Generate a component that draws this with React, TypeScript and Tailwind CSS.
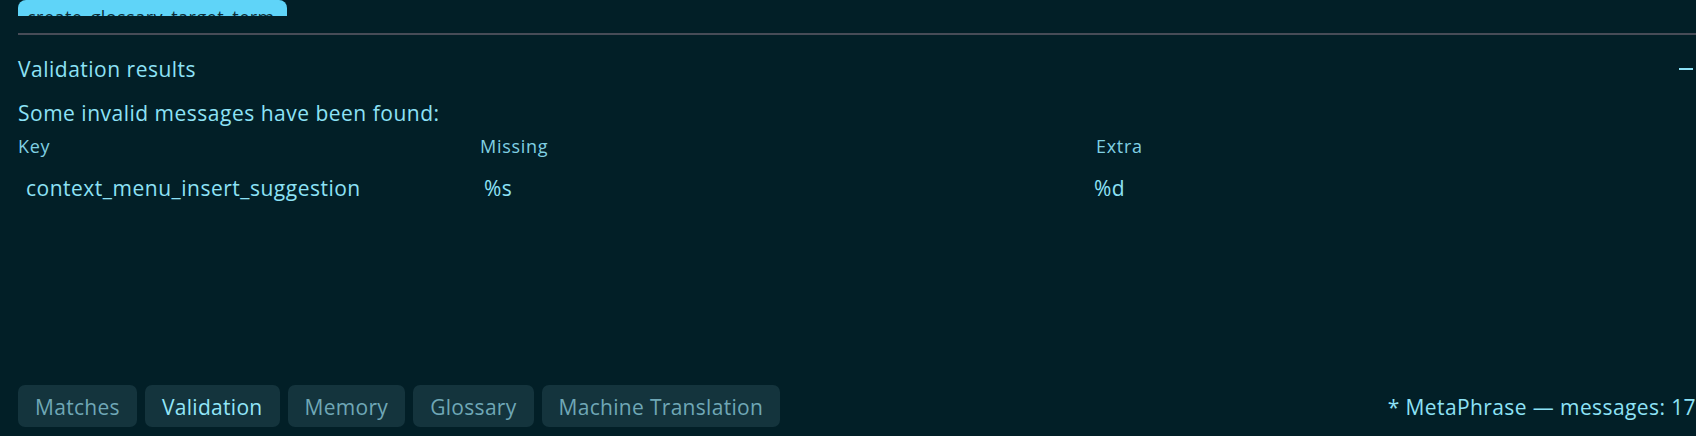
import React from "react"

const tabs = [
  { label: "Matches", active: false },
  { label: "Validation", active: true },
  { label: "Memory", active: false },
  { label: "Glossary", active: false },
  { label: "Machine Translation", active: false },
]

export default function App() {
  return (
    <div
      className="h-[436px] w-[1696px] overflow-hidden bg-[#021f27] text-[#8de2f6]"
      style={{ fontFamily: '"Open Sans", "Noto Sans", sans-serif' }}
    >
      <div className="flex h-full w-[1714px] flex-col pl-[18px] pr-[18px]">
        {/* scrolled list, clipped */}
        <div className="h-[16px] overflow-hidden">
          <div className="inline-flex h-[30px] items-start rounded-[8px] bg-[#5fd4f8] pl-[9px] pr-[12px] pt-[5px] text-[18px] leading-[24px] tracking-[0.45px] text-[#0d2c35]">
            create_glossary_target_term
          </div>
        </div>

        <div className="mt-[17px] h-[2px] bg-[#474c57]" />

        {/* Validation panel */}
        <div className="flex flex-1 flex-col">
          <div className="mt-[20px] flex h-[28px] items-center justify-between">
            <span className="text-[21px] leading-[28px] tracking-[0.5px]">Validation results</span>
            <span className="mr-[3px] h-[2px] w-[14px] bg-[#8de2f6]" />
          </div>
          <div className="mt-[16px] text-[21px] leading-[28px] tracking-[0.5px]">
            Some invalid messages have been found:
          </div>
          <div className="mt-[7px] grid grid-cols-[462px_616px_1fr] text-[18px] leading-[24px] tracking-[0.7px] text-[#80d0e3]">
            <span>Key</span>
            <span>Missing</span>
            <span>Extra</span>
          </div>
          <div className="mt-[16px] grid grid-cols-[462px_616px_1fr] text-[21px] leading-[28px] tracking-[0.5px]">
            <span className="pl-[8px]">context_menu_insert_suggestion</span>
            <span className="pl-[4px]">%s</span>
            <span className="-ml-[2px]">%d</span>
          </div>
        </div>

        {/* Footer */}
        <div className="mb-[9px] flex items-center justify-between">
          <div className="flex gap-[8px]">
            {tabs.map((t) => (
              <button
                key={t.label}
                type="button"
                className={
                  "h-[42px] rounded-[7px] bg-[#14343d] px-[17px] pt-[3px] text-[21px] tracking-[0.3px] " +
                  (t.active ? "text-[#92e6f9]" : "text-[#6fa7b6]")
                }
              >
                {t.label}
              </button>
            ))}
          </div>
          <span className="pt-[3px] text-[21px] tracking-[0.4px] text-[#8de2f6]">* MetaPhrase — messages: 17</span>
        </div>
      </div>
    </div>
  )
}
